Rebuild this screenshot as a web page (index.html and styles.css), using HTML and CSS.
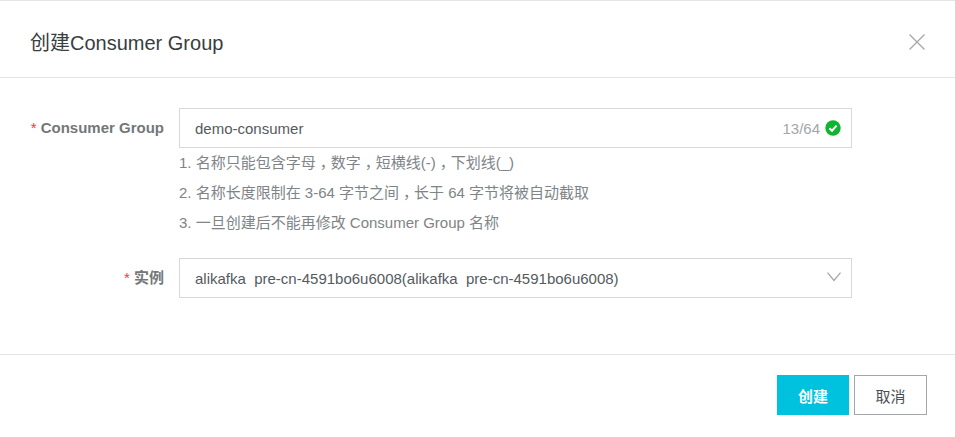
FILE: index.html

```html
<!DOCTYPE html>
<html lang="zh-CN">
<head>
  <meta charset="UTF-8">
  <title>创建Consumer Group</title>
  <link rel="stylesheet" href="styles.css">
</head>
<body>
  <div class="dialog">
    <div class="dialog-header">
      <h2>创建Consumer Group</h2>
      <svg class="close-icon" width="16" height="16" viewBox="0 0 16 16">
        <path d="M0.5 0.5L15.5 15.5M15.5 0.5L0.5 15.5" fill="none" stroke="#a3a6a9" stroke-width="1.3"/>
      </svg>
    </div>

    <div class="dialog-body">
      <div class="form-row">
        <label class="form-label"><span class="required">*</span> Consumer Group</label>
        <div class="form-control">
          <div class="field">
            <span class="field-value">demo-consumer</span>
            <span class="field-count">13/64</span>
            <svg class="check-icon" width="16" height="16" viewBox="0 0 16 16">
              <circle cx="8" cy="8" r="7.7" fill="#0eb52f"/>
              <path d="M4.4 8.2L7 10.7L11.6 5.6" fill="none" stroke="#fff" stroke-width="2"/>
            </svg>
          </div>
          <ul class="hints">
            <li>1. 名称只能包含字母<span class="comma">，</span>数字<span class="comma">，</span>短横线(-)<span class="comma">，</span>下划线(_)</li>
            <li>2. 名称长度限制在 3-64 字节之间<span class="comma">，</span>长于 64 字节将被自动截取</li>
            <li>3. 一旦创建后不能再修改 Consumer Group 名称</li>
          </ul>
        </div>
      </div>

      <div class="form-row">
        <label class="form-label"><span class="required">*</span> 实例</label>
        <div class="form-control">
          <div class="field">
            <span class="field-value">alikafka  pre-cn-4591bo6u6008(alikafka  pre-cn-4591bo6u6008)</span>
            <svg class="arrow-icon" width="14" height="10" viewBox="0 0 14 10">
              <path d="M0.5 0.7L7 8.5L13.5 0.7" fill="none" stroke="#a3a6a9" stroke-width="1.3"/>
            </svg>
          </div>
        </div>
      </div>
    </div>

    <div class="dialog-footer">
      <button type="button" class="btn btn-primary">创建</button>
      <button type="button" class="btn btn-default">取消</button>
    </div>
  </div>
</body>
</html>
```

FILE: styles.css

```css
* {
  box-sizing: border-box;
}

body {
  margin: 0;
  background: white;
  color: #4a4f55;
  font-family: "Liberation Sans", "Noto Sans CJK SC", sans-serif;
  font-size: 15px;
}

.dialog {
  height: 437px;
  border-top: 1px solid #e3e4e6;
}

.dialog-header {
  height: 77px;
  padding: 5px 30px 0 30px;
  display: flex;
  justify-content: space-between;
  align-items: center;
  border-bottom: 1px solid #e3e4e6;
}

.dialog-header h2 {
  margin: 0;
  font-size: 20px;
  font-weight: normal;
  color: #373d41;
}

.close-icon {
  display: block;
}

.dialog-body {
  height: 276px;
  padding-top: 30px;
}

.form-row {
  display: flex;
  margin-bottom: 20px;
}

.form-label {
  width: 164px;
  margin-right: 15px;
  height: 40px;
  line-height: 40px;
  text-align: right;
  font-weight: bold;
  color: #73777a;
  flex-shrink: 0;
}

.required {
  color: #f33;
  font-weight: normal;
}

.form-control {
  width: 673px;
}

.field {
  height: 40px;
  padding: 0 10px 0 15px;
  display: flex;
  align-items: center;
  border: 1px solid #d7d8d9;
}

.field-value {
  flex: 1;
  white-space: pre;
  color: #555a60;
}

.field-count {
  color: #a3a6a9;
  margin-right: 5px;
}

.check-icon {
  display: block;
}

.arrow-icon {
  display: block;
  margin-bottom: 2px;
}

.hints {
  list-style: none;
  margin: 0;
  padding: 0;
}

.hints li {
  height: 30px;
  line-height: 30px;
  color: #808487;
}

/* reference font centres the full-width comma in its cell */
.comma {
  padding-left: 4px;
  letter-spacing: -4px;
}

.dialog-footer {
  height: 83px;
  padding: 20px 28px 0 0;
  display: flex;
  justify-content: flex-end;
  gap: 5px;
  border-top: 1px solid #e3e4e6;
}

.btn {
  height: 40px;
  font-family: inherit;
  font-size: 15px;
  padding: 0;
}

.btn-primary {
  width: 72px;
  border: none;
  background: #00c1de;
  color: white;
  font-weight: bold;
}

.btn-default {
  width: 73px;
  border: 1px solid #a3a6a9;
  background: white;
  color: #4a4f55;
}
```
